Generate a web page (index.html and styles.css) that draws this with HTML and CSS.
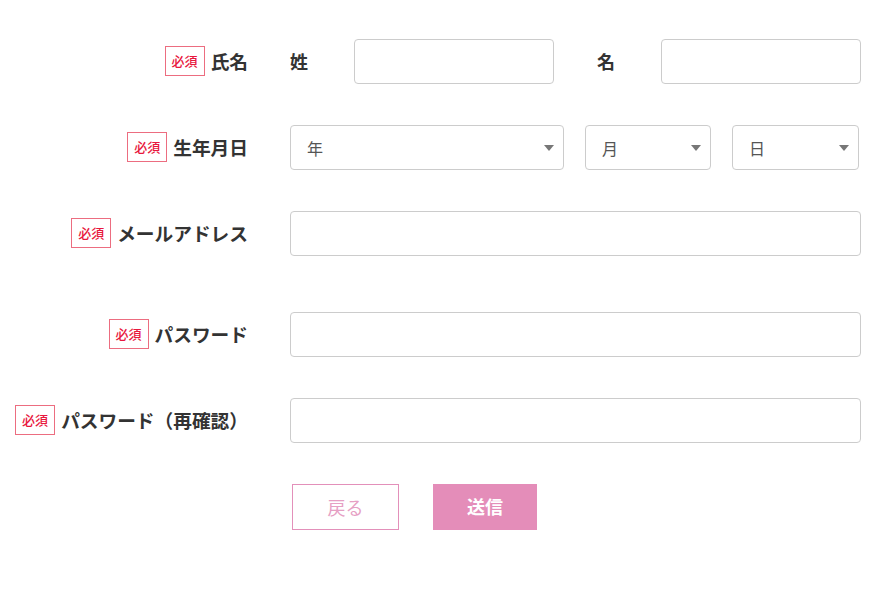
FILE: index.html
```html
<!DOCTYPE html>
<html lang="ja">

<head>
  <meta charset="utf-8">
  <title>会員登録</title>
  <link rel="stylesheet" href="styles.css">
</head>

<body>
  <form class="form">
    <div class="row">
      <div class="label"><span class="req">必須</span>氏名</div>
      <div class="field">
        <span class="sub">姓</span>
        <input type="text" class="box name">
        <span class="sub sub-gap">名</span>
        <input type="text" class="box name">
      </div>
    </div>

    <div class="row">
      <div class="label"><span class="req">必須</span>生年月日</div>
      <div class="field">
        <div class="sel year"><select class="box"><option>年</option></select></div>
        <div class="sel month"><select class="box"><option>月</option></select></div>
        <div class="sel day"><select class="box"><option>日</option></select></div>
      </div>
    </div>

    <div class="row row-sep">
      <div class="label"><span class="req">必須</span>メールアドレス</div>
      <div class="field">
        <input type="email" class="box wide">
      </div>
    </div>

    <div class="row">
      <div class="label"><span class="req">必須</span>パスワード</div>
      <div class="field">
        <input type="password" class="box wide">
      </div>
    </div>

    <div class="row">
      <div class="label"><span class="req">必須</span>パスワード（再確認）</div>
      <div class="field">
        <input type="password" class="box wide">
      </div>
    </div>

    <div class="buttons">
      <button type="button" class="btn back">戻る</button>
      <button type="submit" class="btn send">送信</button>
    </div>
  </form>
</body>

</html>
```

FILE: styles.css
```css
body {
  margin: 0;
  background-color: #fff;
  font-family: "Noto Sans CJK JP", "Noto Sans", sans-serif;
  color: #333;
}

.form {
  padding-top: 39px;
}

.row {
  display: grid;
  grid-template-columns: 248px 571px;
  column-gap: 42px;
  align-items: center;
  margin-bottom: 41px;
}

.row-sep {
  margin-bottom: 56px;
}

.label {
  display: flex;
  justify-content: flex-end;
  align-items: center;
  font-size: 18.7px;
  font-weight: bold;
  white-space: nowrap;
  padding-bottom: 2px;
}

.req {
  display: flex;
  align-items: center;
  justify-content: center;
  box-sizing: border-box;
  width: 40px;
  height: 30px;
  margin-right: 6px;
  border: 1px solid #ec6d80;
  color: #e8173d;
  font-size: 13px;
  font-weight: 500;
}

.field {
  display: flex;
  align-items: center;
}

.sub {
  width: 64px;
  font-size: 18px;
  font-weight: bold;
  padding-bottom: 2px;
}

.sub-gap {
  margin-left: 43px;
}

.box {
  box-sizing: border-box;
  height: 45px;
  border: 1px solid #ccc;
  border-radius: 4px;
  background-color: #fff;
  font-family: inherit;
  font-size: 16px;
  color: #555;
  padding: 0 16px;
  margin: 0;
}

.name {
  width: 200px;
}

.wide {
  width: 571px;
}

.sel {
  position: relative;
}

.sel select {
  width: 100%;
  appearance: none;
  -webkit-appearance: none;
}

.sel::after {
  content: "";
  position: absolute;
  right: 10px;
  top: 20px;
  border-left: 5px solid transparent;
  border-right: 5px solid transparent;
  border-top: 6px solid #777;
  pointer-events: none;
}

.year {
  width: 274px;
}

.month {
  width: 126px;
  margin-left: 21px;
}

.day {
  width: 127px;
  margin-left: 21px;
}

.buttons {
  display: flex;
  gap: 34px;
  padding-left: 292px;
}

.btn {
  box-sizing: border-box;
  height: 46px;
  font-family: inherit;
  font-size: 18px;
  border-radius: 0;
  cursor: pointer;
}

.back {
  width: 107px;
  border: 1px solid #e390ba;
  background-color: #fff;
  color: #e6a0c4;
}

.send {
  width: 104px;
  border: none;
  background-color: #e48db9;
  color: #fff;
  font-weight: bold;
  padding-bottom: 4px;
}
```
